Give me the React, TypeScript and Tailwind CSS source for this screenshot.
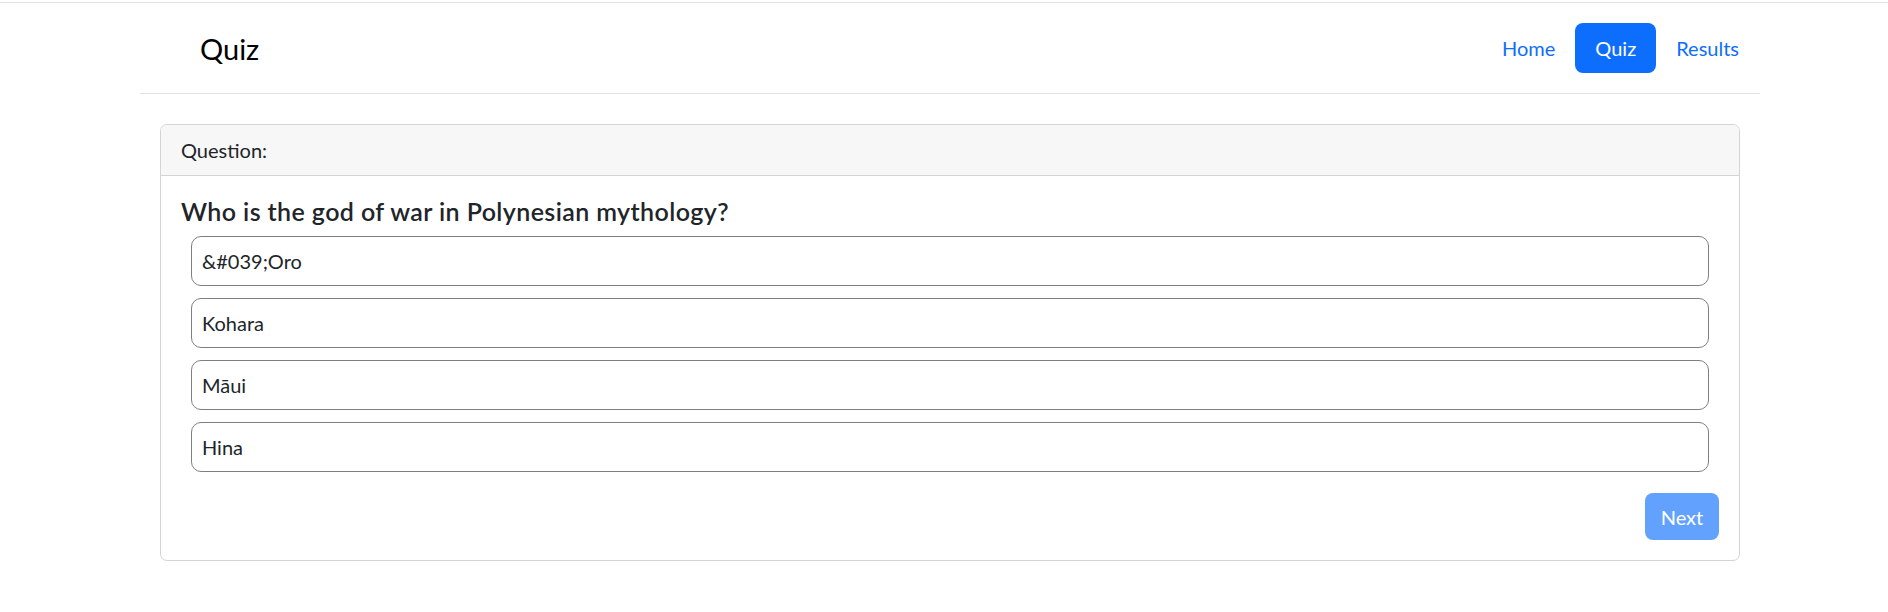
import { useState } from "react";

const ANSWERS = ["&#039;Oro", "Kohara", "Māui", "Hina"];

export default function App() {
  const [picked, setPicked] = useState<string | null>(null);

  return (
    <div className="min-h-screen bg-white text-[#212529] font-['Segoe_UI','Lato',sans-serif]">
      <div className="h-[2px]" />
      <div className="h-px bg-[#e3e3e3]" />

      {/* Navbar */}
      <nav className="ml-[140px] w-[1620px] h-[91px] border-b border-[#dee2e6] flex items-center justify-between pl-[60px] pr-px">
        <a className="text-[29px] leading-none text-black">Quiz</a>
        <ul className="flex items-center">
          <li>
            <a className="block px-[20px] h-[50px] leading-[50px] text-[20px] text-[#0d6efd]">Home</a>
          </li>
          <li>
            <a className="block px-[20px] h-[50px] leading-[50px] text-[20px] text-white bg-[#0d6efd] rounded-[8px]">Quiz</a>
          </li>
          <li>
            <a className="block px-[20px] h-[50px] leading-[50px] text-[20px] text-[#0d6efd]">Results</a>
          </li>
        </ul>
      </nav>

      {/* Question card */}
      <div className="ml-[160px] w-[1580px] mt-[30px] border border-[#d3d4d5] rounded-[7px] overflow-hidden">
        <div className="h-[51px] px-[20px] flex items-center bg-[#f7f7f7] border-b border-[#d3d4d5] text-[20px]">
          Question:
        </div>
        <div className="p-[20px]">
          <h5 className="text-[25px] font-semibold leading-[30px] tracking-[0.4px] mb-[10px]">
            Who is the god of war in Polynesian mythology?
          </h5>
          <div className="flex flex-col gap-[12px] mx-[10px]">
            {ANSWERS.map((a) => (
              <button
                key={a}
                onClick={() => setPicked(a)}
                className={`h-[50px] px-[10px] text-left text-[20px] border rounded-[10px] ${
                  picked === a ? "border-[#0d6efd] bg-[#e7f1ff]" : "border-[#7f7f7f] bg-white"
                }`}
              >
                {a}
              </button>
            ))}
          </div>
          <div className="flex justify-end mt-[21px]">
            <button
              disabled={!picked}
              className="h-[47px] w-[74px] rounded-[8px] bg-[#62a2fe] text-white text-[20px]"
            >
              Next
            </button>
          </div>
        </div>
      </div>
    </div>
  );
}
